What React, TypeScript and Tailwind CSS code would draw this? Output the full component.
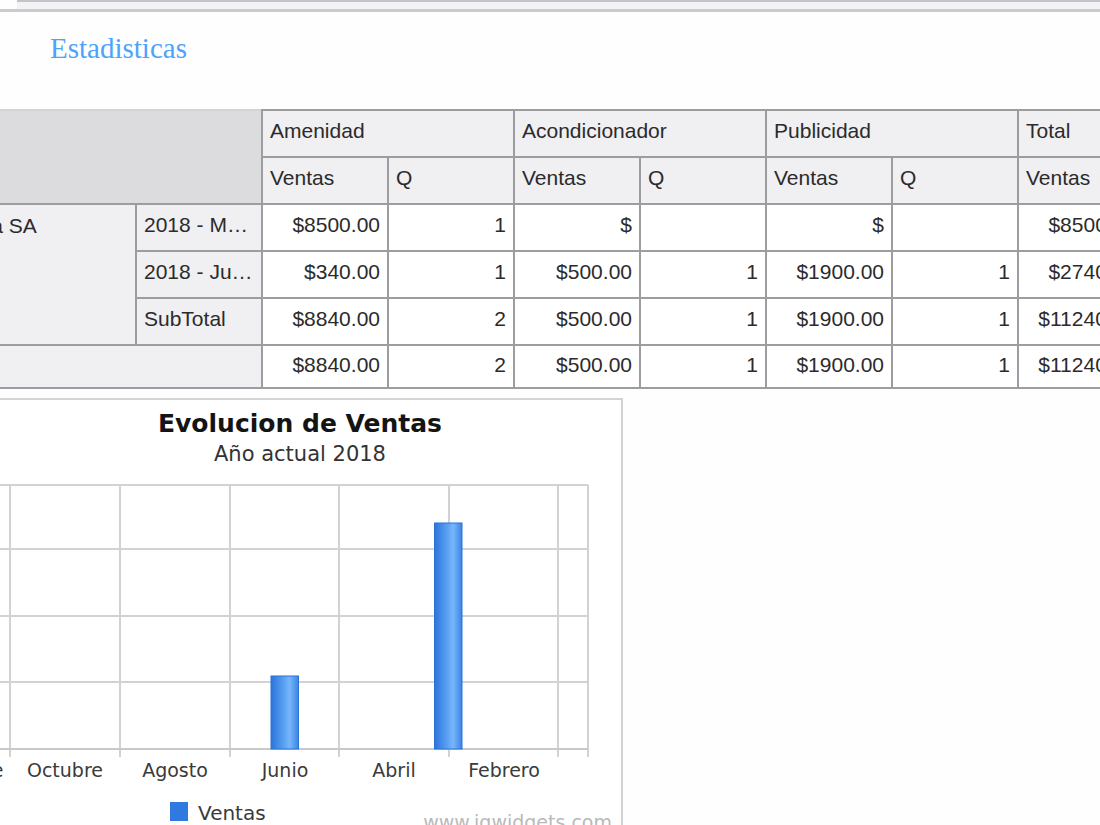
import React from "react";

type Row = {
  period: string;
  cells: string[];
};

const rows: Row[] = [
  { period: "2018 - Marzo", cells: ["$8500.00", "1", "$", "", "$", "", "$8500.00", "1"] },
  { period: "2018 - Junio", cells: ["$340.00", "1", "$500.00", "1", "$1900.00", "1", "$2740.00", "3"] },
  { period: "SubTotal", cells: ["$8840.00", "2", "$500.00", "1", "$1900.00", "1", "$11240.00", "4"] },
];

const totals = ["$8840.00", "2", "$500.00", "1", "$1900.00", "1", "$11240.00", "4"];

const groups = ["Amenidad", "Acondicionador", "Publicidad", "Total"];

const cell = "border-2 border-[#9d9ca0] px-[7px] pt-0 pb-[5px] h-[47px] align-middle";
const lastCell = "border-2 border-[#9d9ca0] px-[7px] pt-0 pb-[3px] h-[43px] align-middle";

function SalesTable() {
  return (
    <table className="ml-[-88px] table-fixed border-collapse w-[1358px] text-[21px] text-[#2b2b2b] font-['Liberation_Sans',Arial,sans-serif]">
      <colgroup>
        <col className="w-[224px]" />
        <col className="w-[126px]" />
        {Array.from({ length: 8 }).map((_, i) => (
          <col key={i} className="w-[126px]" />
        ))}
      </colgroup>
      <thead>
        <tr>
          <th
            colSpan={2}
            rowSpan={2}
            className="bg-[#dcdbde] border-2 border-[#9d9ca0] border-t-[#d4d3d6] border-l-0"
          />
          {groups.map((g) => (
            <th key={g} colSpan={2} className={`${cell} bg-[#f0eff2] text-left font-normal`}>
              {g}
            </th>
          ))}
        </tr>
        <tr>
          {groups.map((g) => (
            <React.Fragment key={g}>
              <th className={`${cell} bg-[#f0eff2] text-left font-normal`}>Ventas</th>
              <th className={`${cell} bg-[#f0eff2] text-left font-normal`}>Q</th>
            </React.Fragment>
          ))}
        </tr>
      </thead>
      <tbody>
        {rows.map((r, i) => (
          <tr key={r.period}>
            {i === 0 && (
              <td rowSpan={3} className={`${cell} bg-[#f0eff2] align-top !pt-[5px] border-l-0`}>
                Empresa SA
              </td>
            )}
            <td className={`${cell} bg-[#f0eff2] truncate`}>{r.period}</td>
            {r.cells.map((c, j) => (
              <td key={j} className={`${cell} bg-white text-right`}>
                {c}
              </td>
            ))}
          </tr>
        ))}
        <tr>
          <td colSpan={2} className={`${lastCell} bg-[#f0eff2] border-l-0`} />
          {totals.map((c, j) => (
            <td key={j} className={`${lastCell} bg-white text-right`}>
              {c}
            </td>
          ))}
        </tr>
      </tbody>
    </table>
  );
}

const vLines = [-100, 10, 120, 230, 339, 449, 558];
const hLines = [486, 550, 617, 683];
const labels: [string, number][] = [
  ["Diciembre", -45],
  ["Octubre", 65],
  ["Agosto", 175],
  ["Junio", 285],
  ["Abril", 394],
  ["Febrero", 504],
];

function SalesChart() {
  return (
    <div className="mt-[9px] ml-[-80px] w-[703px] h-[440px] border-2 border-[#d3d3d3] bg-white overflow-hidden">
      <svg
        width="699"
        height="436"
        viewBox="-78 401 699 436"
        className="block"
        fontFamily="'DejaVu Sans', Verdana, sans-serif"
      >
        <defs>
          <linearGradient id="bar" x1="0" x2="1" y1="0" y2="0">
            <stop offset="0" stopColor="#2b75da" />
            <stop offset="0.5" stopColor="#5ea4f4" />
            <stop offset="0.68" stopColor="#78b6fb" />
            <stop offset="1" stopColor="#3a84e3" />
          </linearGradient>
        </defs>

        <text x="300" y="433" textAnchor="middle" fontSize="25" fontWeight="bold" fill="#141414">
          Evolucion de Ventas
        </text>
        <text x="300" y="462" textAnchor="middle" fontSize="21" fill="#333">
          Año actual 2018
        </text>

        {hLines.map((y) => (
          <line key={y} x1="-78" x2="588" y1={y} y2={y} stroke="#d2d2d2" strokeWidth="2" />
        ))}
        {vLines.map((x) => (
          <line key={x} x1={x} x2={x} y1="486" y2="758" stroke="#d2d2d2" strokeWidth="2" />
        ))}
        <line x1="588" x2="588" y1="486" y2="758" stroke="#d2d2d2" strokeWidth="2" />
        <line x1="-78" x2="588" y1="750" y2="750" stroke="#c9c9c9" strokeWidth="2" />

        <rect x="271" y="677" width="27.5" height="73" fill="url(#bar)" stroke="#2a72d6" strokeWidth="1" />
        <rect x="434.5" y="524" width="27.5" height="226" fill="url(#bar)" stroke="#2a72d6" strokeWidth="1" />

        {labels.map(([t, x]) => (
          <text key={t} x={x} y="778" textAnchor="middle" fontSize="19" fill="#3a3a3a">
            {t}
          </text>
        ))}

        <rect x="170" y="803" width="18" height="19" fill="#2f79df" />
        <text x="198" y="821" fontSize="20" fill="#3a3a3a">
          Ventas
        </text>
        <text x="612" y="830" textAnchor="end" fontSize="19" fill="#b9b9b9">
          www.igwidgets.com
        </text>
      </svg>
    </div>
  );
}

export default function App() {
  return (
    <div className="w-[1100px] h-[825px] overflow-hidden bg-[#fefefe]">
      <div className="border-b-[3px] border-[#cbcacd]">
        <div className="ml-[17px] h-[9px] border-t-2 border-[#c4c3c7] bg-[#f3f2f5]" />
      </div>

      <div className="h-[97px] pl-[50px] pt-[19px]">
        <a className="text-[29px] leading-[34px] text-[#4da2fb] font-['Liberation_Serif',serif] cursor-pointer">
          Estadisticas
        </a>
      </div>

      <SalesTable />
      <SalesChart />
    </div>
  );
}
